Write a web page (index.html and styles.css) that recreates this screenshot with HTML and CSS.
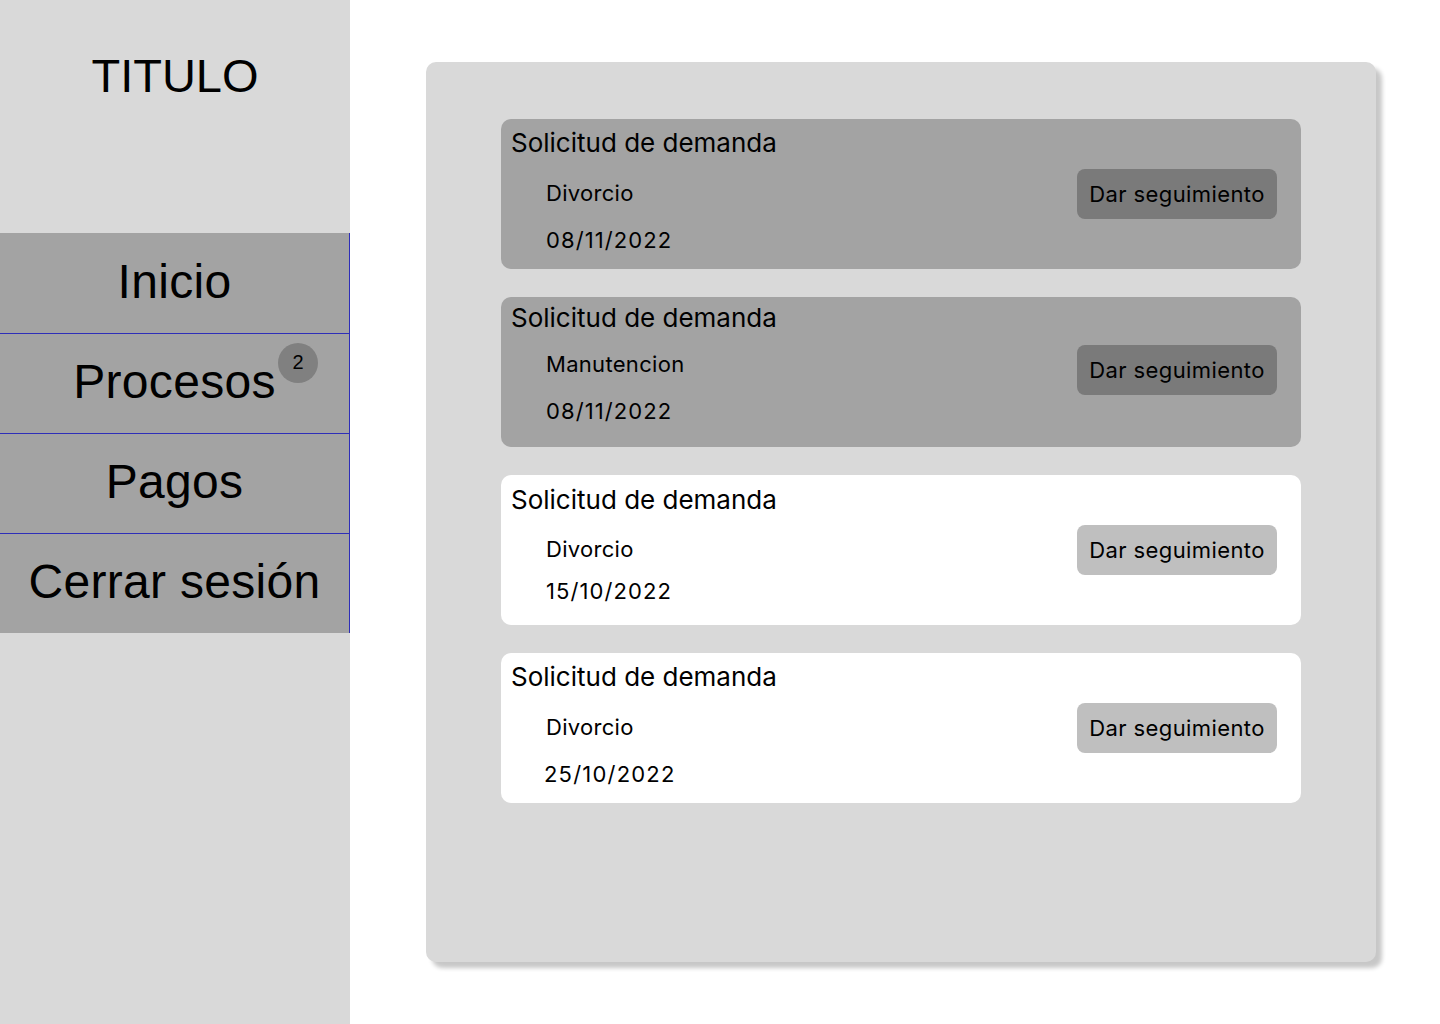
FILE: index.html
```html
<!DOCTYPE html>
<html lang="es">
<head>
<meta charset="utf-8">
<title>TITULO</title>
<link rel="stylesheet" href="styles.css">
</head>
<body>
<aside class="sidebar">
  <div class="brand">TITULO</div>
  <nav class="menu">
    <a class="menu-item">Inicio</a>
    <a class="menu-item">Procesos<span class="badge">2</span></a>
    <a class="menu-item">Pagos</a>
    <a class="menu-item">Cerrar sesión</a>
  </nav>
</aside>
<main class="main">
  <section class="panel">
    <article class="card card-dark">
      <h2 class="card-title">Solicitud de demanda</h2>
      <div class="card-body">
        <div class="card-info">
          <p class="card-type">Divorcio</p>
          <p class="card-date">08/11/2022</p>
        </div>
        <button class="btn btn-dark">Dar seguimiento</button>
      </div>
    </article>
    <article class="card card-dark card-up">
      <h2 class="card-title">Solicitud de demanda</h2>
      <div class="card-body">
        <div class="card-info">
          <p class="card-type">Manutencion</p>
          <p class="card-date">08/11/2022</p>
        </div>
        <button class="btn btn-dark">Dar seguimiento</button>
      </div>
    </article>
    <article class="card card-light card-tight">
      <h2 class="card-title">Solicitud de demanda</h2>
      <div class="card-body">
        <div class="card-info">
          <p class="card-type">Divorcio</p>
          <p class="card-date">15/10/2022</p>
        </div>
        <button class="btn btn-light">Dar seguimiento</button>
      </div>
    </article>
    <article class="card card-light">
      <h2 class="card-title">Solicitud de demanda</h2>
      <div class="card-body">
        <div class="card-info">
          <p class="card-type">Divorcio</p>
          <p class="card-date card-date-wide">25/10/2022</p>
        </div>
        <button class="btn btn-light">Dar seguimiento</button>
      </div>
    </article>
  </section>
</main>
</body>
</html>
```

FILE: styles.css
```css
* { box-sizing: border-box; }
html, body { margin: 0; padding: 0; }
body {
  width: 1440px;
  height: 1024px;
  display: flex;
  background: #ffffff;
  color: #000;
  overflow: hidden;
}
.sidebar {
  width: 350px;
  height: 1024px;
  flex: none;
  background: #d9d9d9;
  font-family: "Liberation Sans", Arial, sans-serif;
}
.brand {
  height: 233px;
  padding-top: 48px;
  text-align: center;
  font-size: 47px;
  line-height: 56px;
}
.menu {
  display: flex;
  flex-direction: column;
}
.menu-item {
  position: relative;
  display: flex;
  align-items: center;
  justify-content: center;
  height: 100px;
  background: #a3a3a3;
  border-right: 1px solid #2e2eb8;
  font-size: 48px;
  letter-spacing: 0.3px;
  color: #000;
  padding-bottom: 4px;
}
.menu-item + .menu-item {
  border-top: 1px solid #2e2eb8;
}
.badge {
  position: absolute;
  left: 278px;
  top: 9px;
  width: 40px;
  height: 40px;
  border-radius: 50%;
  background: #808080;
  font-size: 20px;
  line-height: 38px;
  letter-spacing: 0;
  text-align: center;
}
.main {
  flex: 1;
  padding: 62px 0 0 76px;
}
.panel {
  width: 950px;
  height: 900px;
  background: #d9d9d9;
  border-radius: 10px;
  box-shadow: 6px 6px 4px rgba(0, 0, 0, 0.22);
  padding: 57px 0 0 75px;
  display: flex;
  flex-direction: column;
  gap: 28px;
  font-family: "Inter", "Open Sans", sans-serif;
}
.card {
  width: 800px;
  height: 150px;
  border-radius: 10px;
  padding: 8px 24px 0 10px;
}
.card-dark { background: #a3a3a3; }
.card-light { background: #ffffff; }
.card-title {
  margin: 0;
  font-size: 26px;
  line-height: 32px;
  font-weight: 400;
}
.card-body {
  display: flex;
  justify-content: space-between;
  align-items: flex-start;
}
.card-info {
  padding: 20px 0 0 35px;
}
.card-info p {
  margin: 0;
  font-size: 22px;
  line-height: 28px;
  letter-spacing: 0.3px;
}
.card-info .card-date {
  margin-top: 19px;
  letter-spacing: 1.1px;
}
.card-info .card-date-wide {
  margin-left: -2px;
  letter-spacing: 1.2px;
}
.btn {
  margin-top: 10px;
  width: 200px;
  height: 50px;
  border: none;
  border-radius: 8px;
  font-family: inherit;
  font-size: 22px;
  letter-spacing: 0.4px;
  color: #000;
  padding: 0;
}
.btn-dark { background: #7a7a7a; }
.btn-light { background: #bfbfbf; }
.card-up { padding-top: 5px; }
.card-up .card-info { padding-top: 16px; }
.card-up .btn { margin-top: 11px; }
.card-tight { padding-top: 9px; }
.card-tight .card-info { padding-top: 19px; }
.card-tight .card-info .card-date { margin-top: 14px; }
.card-tight .btn { margin-top: 9px; }
```
